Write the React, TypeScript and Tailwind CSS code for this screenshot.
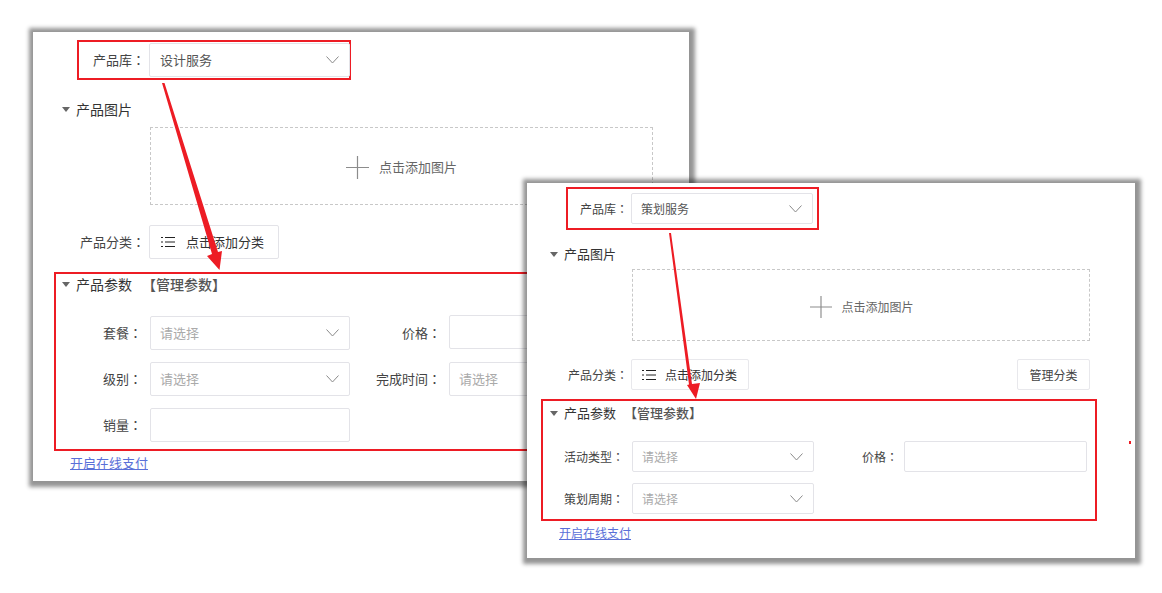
const fontCss = "font-['Noto_Sans_CJK_SC','Noto_Sans',sans-serif]";

const Chevron = () => (
  <svg width="13" height="8" viewBox="0 0 13 8" fill="none" className="shrink-0">
    <path d="M0.5 0.5 L6.5 7 L12.5 0.5" stroke="#8a8a8a" strokeWidth="1" />
  </svg>
);

const Caret = () => (
  <svg width="8" height="5" viewBox="0 0 8 5" className="shrink-0">
    <path d="M0 0 H8 L4 5 Z" fill="#666" />
  </svg>
);

const Plus = ({ size }: { size: number }) => (
  <svg width={size} height={size} viewBox="0 0 23 23" className="shrink-0">
    <path d="M0 11.5 H23 M11.5 0 V23" stroke="#8c8c8c" strokeWidth="1.2" />
  </svg>
);

const ListIcon = () => (
  <svg width="14" height="12" viewBox="0 0 14 12" className="shrink-0">
    <path d="M0 1.5 H2 M4 1.5 H14 M0 6 H2 M4 6 H14 M0 10.5 H2 M4 10.5 H14" stroke="#222" strokeWidth="1" />
  </svg>
);

// centred full width colon comes from the TC cut of the font
const Label = ({ text, className }: { text: string; className: string }) => (
  <span className={`shrink-0 text-right text-[#444] ${className}`}>
    {text}
    <span className="font-['Noto_Sans_CJK_TC',sans-serif]">：</span>
  </span>
);

const Select = ({ value, placeholder, className }: { value?: string; placeholder?: string; className: string }) => (
  <div className={`flex shrink-0 items-center justify-between rounded-[2px] border border-[#e3e3e8] bg-white pl-[9px] pr-[10px] ${className}`}>
    <span className={value ? "text-[#555]" : "text-[#aaa]"}>{value ?? placeholder}</span>
    <Chevron />
  </div>
);

const Input = ({ className }: { className: string }) => (
  <div className={`shrink-0 rounded-[2px] border border-[#e3e3e8] bg-white ${className}`} />
);

const Heading = ({ text, children, className }: { text: string; children?: React.ReactNode; className: string }) => (
  <div className={`flex items-center ${className}`}>
    <Caret />
    <span className="ml-[6px] text-[#333]">{text}</span>
    {children}
  </div>
);

const Arrows = () => (
  <svg width="1162" height="593" viewBox="0 0 1162 593" className="pointer-events-none absolute left-0 top-0">
    <path d="M162 83 L164.5 83 L218 252 L222 251 L219.5 270 L207 256 L212 254 Z" fill="#ed1c24" />
    <path d="M669 233 L671 233 L692 384 L700 383 L696 399 L687 385 L689 384.5 Z" fill="#ed1c24" />
  </svg>
);

const BackPanel = () => (
  <div className="absolute left-[33px] top-[32px] h-[449px] w-[656px] bg-white text-[13px] shadow-[1px_1px_4px_5px_rgba(0,0,0,0.42)]">
    <div className="ml-[44px] mt-[8px] flex h-[40px] w-[274px] items-center border-2 border-[#ed1c24]">
      <Label text="产品库" className="w-[66px]" />
      <Select value="设计服务" className="ml-[4px] h-[34px] w-[201px] [&>span]:ml-px" />
    </div>

    <Heading text="产品图片" className="ml-[29px] mt-[19px] h-[20px] text-[14px]" />
    <div className="ml-[117px] mt-[8px] flex h-[78px] w-[503px] items-center justify-center gap-[10px] border border-dashed border-[#c8c8c8] pt-[2px] text-[#666]">
      <Plus size={23} />
      <span>点击添加图片</span>
    </div>

    <div className="mt-[20px] flex items-center">
      <Label text="产品分类" className="w-[112px]" />
      <div className="ml-[4px] flex h-[34px] w-[130px] items-center gap-[11px] rounded-[2px] border border-[#e3e3e8] pl-[11px] text-[#333]">
        <ListIcon />
        <span>点击添加分类</span>
      </div>
    </div>

    <div className="ml-[21px] mt-[13px] h-[179px] w-[600px] border-2 border-[#ed1c24]">
      <Heading text="产品参数" className="ml-[6px] h-[20px] text-[14px]">
        <span className="ml-[10px] text-[#555] [font-weight:500]">【管理参数】</span>
      </Heading>
      <div className="mt-[22px] flex flex-col gap-[12px]">
        <div className="flex items-center">
          <Label text="套餐" className="w-[86px]" />
          <Select placeholder="请选择" className="ml-[8px] h-[34px] w-[200px]" />
          <Label text="价格" className="w-[91px]" />
          <Input className="ml-[8px] -mt-[2px] h-[34px] w-[200px]" />
        </div>
        <div className="flex items-center">
          <Label text="级别" className="w-[86px]" />
          <Select placeholder="请选择" className="ml-[8px] h-[34px] w-[200px]" />
          <Label text="完成时间" className="w-[91px]" />
          <Select placeholder="请选择" className="ml-[8px] h-[34px] w-[200px]" />
        </div>
        <div className="flex items-center">
          <Label text="销量" className="w-[86px]" />
          <Input className="ml-[8px] h-[34px] w-[200px]" />
        </div>
      </div>
    </div>

    <a className="ml-[37px] mt-[2px] block text-[#5a6fd8] underline">开启在线支付</a>
  </div>
);

const FrontPanel = () => (
  <div className="absolute left-[527px] top-[183px] h-[375px] w-[608px] bg-white text-[12px] shadow-[1px_1px_4px_5px_rgba(0,0,0,0.42)]">
    <div className="ml-[39px] mt-[4px] flex h-[43px] w-[253px] items-center border-2 border-[#ed1c24]">
      <Label text="产品库" className="w-[60px]" />
      <Select value="策划服务" className="ml-[3px] h-[31px] w-[182px]" />
    </div>

    <Heading text="产品图片" className="ml-[23px] mt-[14px] h-[20px] text-[13px]" />
    <div className="ml-[105px] mt-[5px] flex h-[72px] w-[458px] items-center justify-center gap-[9px] border border-dashed border-[#c8c8c8] pl-[2px] pt-[4px] text-[#666]">
      <Plus size={22} />
      <span>点击添加图片</span>
    </div>

    <div className="mr-[45px] mt-[18px] flex items-center">
      <Label text="产品分类" className="w-[101px]" />
      <div className="ml-[3px] flex h-[31px] w-[118px] items-center gap-[9px] rounded-[2px] border border-[#e8e8ec] pl-[10px] text-[#333]">
        <ListIcon />
        <span>点击添加分类</span>
      </div>
      <div className="ml-auto flex h-[31px] w-[73px] items-center justify-center rounded-[2px] border border-[#e8e8ec] text-[#444]">
        管理分类
      </div>
    </div>

    <div className="ml-[14px] mt-[9px] h-[122px] w-[556px] border-2 border-[#ed1c24]">
      <Heading text="产品参数" className="ml-[7px] mt-[2px] h-[20px] text-[13px]">
        <span className="ml-[8px] text-[#555] [font-weight:500]">【管理参数】</span>
      </Heading>
      <div className="mt-[18px] flex flex-col gap-[11px]">
        <div className="flex items-center">
          <Label text="活动类型" className="w-[81px]" />
          <Select placeholder="请选择" className="ml-[8px] h-[31px] w-[182px]" />
          <Label text="价格" className="w-[84px]" />
          <Input className="ml-[6px] h-[31px] w-[183px]" />
        </div>
        <div className="flex items-center">
          <Label text="策划周期" className="w-[81px]" />
          <Select placeholder="请选择" className="ml-[8px] h-[31px] w-[182px]" />
        </div>
      </div>
    </div>

    <a className="ml-[32px] mt-[3px] block text-[#5a6fd8] underline">开启在线支付</a>
  </div>
);

export default function App() {
  return (
    <div className={`relative h-[593px] w-[1162px] overflow-hidden bg-white ${fontCss}`}>
      <BackPanel />
      <FrontPanel />
      <Arrows />
      <div className="absolute left-[1129px] top-[441px] h-[3px] w-[2px] bg-[#ed1c24]" />
    </div>
  );
}
